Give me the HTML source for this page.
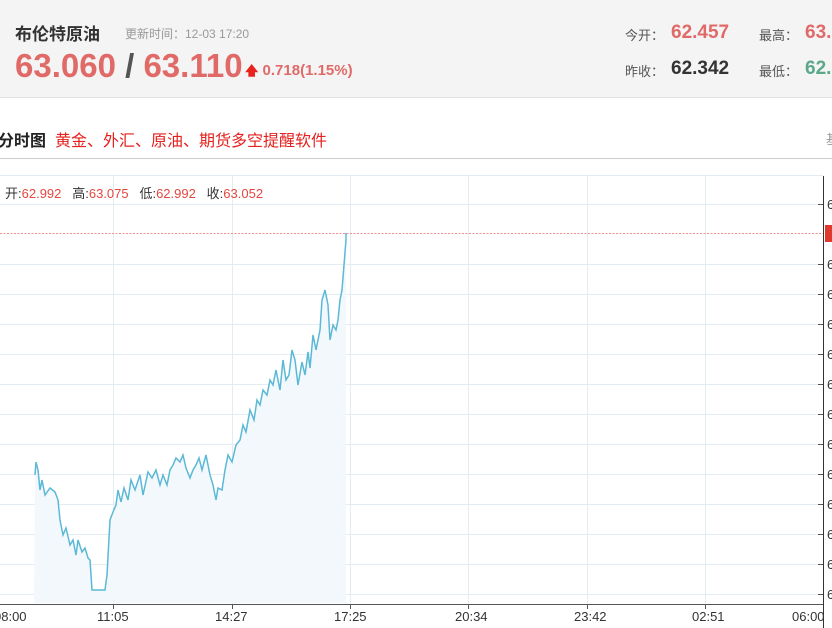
<!DOCTYPE html>
<html><head><meta charset="utf-8"><style>
*{margin:0;padding:0;box-sizing:border-box}
body{width:832px;height:628px;overflow:hidden;background:#fff;font-family:"Liberation Sans","Noto Sans CJK SC",sans-serif;position:relative}
.hd{position:absolute;left:0;top:0;width:832px;height:98px;background:#f4f4f4;border-bottom:1px solid #e2e2e2}
.a{position:absolute;white-space:nowrap}
</style></head><body>
<div class="hd"></div>
<div class="a" style="left:15px;top:20px;font-size:17px;font-weight:bold;color:#333">布伦特原油</div>
<div class="a" style="left:125px;top:25px;font-size:12px;color:#999">更新时间：12-03 17:20</div>
<div class="a" style="left:15px;top:47px;font-size:33px;font-weight:bold;color:#e06a68;letter-spacing:0px">63.060<span style="color:#555"> / </span>63.110</div>
<div class="a" style="left:245px;top:62px;font-size:15px;font-weight:bold;color:#e06a68"><span style="color:#e8231e;font-size:13px">&#129093;</span> 0.718(1.15%)</div>
<div class="a" style="left:625px;top:25px;font-size:13px;color:#555">今开：</div>
<div class="a" style="left:671px;top:22px;font-size:19px;font-weight:bold;color:#e06a68">62.457</div>
<div class="a" style="left:759px;top:25px;font-size:13px;color:#555">最高：</div>
<div class="a" style="left:805px;top:22px;font-size:19px;font-weight:bold;color:#e06a68">63.</div>
<div class="a" style="left:625px;top:61px;font-size:13px;color:#555">昨收：</div>
<div class="a" style="left:671px;top:58px;font-size:19px;font-weight:bold;color:#333">62.342</div>
<div class="a" style="left:759px;top:61px;font-size:13px;color:#555">最低：</div>
<div class="a" style="left:805px;top:58px;font-size:19px;font-weight:bold;color:#5aa888">62.</div>
<div class="a" style="left:-2px;top:127px;font-size:16px;font-weight:bold;color:#222">分时图</div>
<div class="a" style="left:55px;top:127px;font-size:16px;color:#e4211e">黄金、外汇、原油、期货多空提醒软件</div>
<div class="a" style="left:826px;top:129px;font-size:13px;color:#999">基</div>
<div class="a" style="left:0;top:158px;width:832px;height:1px;background:#ccc"></div>
<svg class="a" style="left:0;top:0" width="832" height="628">
<g stroke="#e3ecf3" stroke-width="1">
<line x1="0" y1="175.5" x2="823" y2="175.5"/>
<line x1="0" y1="204.5" x2="823" y2="204.5"/>
<line x1="0" y1="264.5" x2="823" y2="264.5"/><line x1="0" y1="294.5" x2="823" y2="294.5"/>
<line x1="0" y1="324.5" x2="823" y2="324.5"/><line x1="0" y1="354.5" x2="823" y2="354.5"/>
<line x1="0" y1="384.5" x2="823" y2="384.5"/><line x1="0" y1="414.5" x2="823" y2="414.5"/>
<line x1="0" y1="444.5" x2="823" y2="444.5"/><line x1="0" y1="474.5" x2="823" y2="474.5"/>
<line x1="0" y1="504.5" x2="823" y2="504.5"/><line x1="0" y1="534.5" x2="823" y2="534.5"/>
<line x1="0" y1="564.5" x2="823" y2="564.5"/><line x1="0" y1="594.5" x2="823" y2="594.5"/>
<line x1="113.5" y1="175" x2="113.5" y2="604"/><line x1="232.5" y1="175" x2="232.5" y2="604"/>
<line x1="350.5" y1="175" x2="350.5" y2="604"/><line x1="468.5" y1="175" x2="468.5" y2="604"/>
<line x1="587.5" y1="175" x2="587.5" y2="604"/><line x1="705.5" y1="175" x2="705.5" y2="604"/>
</g>
<line x1="0" y1="233.5" x2="823" y2="233.5" stroke="#f29090" stroke-dasharray="2,1.5"/>
<polygon fill="#f3f8fc" points="35,475 36,462 38,470 40,490 42,480 45,495 50,488 55,492 58,500 60,520 63,535 66,528 70,545 73,540 76,555 78,540 82,552 85,548 88,558 90,560 92,590 105,590 107,575 110,520 113,512 116,505 118,490 121,502 124,488 128,500 131,480 135,490 140,475 143,495 148,472 152,478 156,470 160,485 163,475 167,485 170,470 173,465 176,458 180,462 183,455 186,468 190,478 193,470 196,465 199,458 202,470 206,455 210,475 213,485 216,500 218,488 222,490 225,470 228,455 232,462 236,445 240,440 243,425 246,432 250,410 254,420 257,400 260,405 263,390 267,395 270,380 273,385 276,370 280,390 283,360 286,380 289,375 292,350 295,360 298,385 302,362 305,375 308,352 310,368 313,335 316,350 320,330 322,300 325,290 328,305 330,340 333,325 336,330 338,320 340,300 342,290 344,265 346,240 346,233 346,603 34,603"/>
<polyline fill="none" stroke="#5bb9d6" stroke-width="1.5" points="35,475 36,462 38,470 40,490 42,480 45,495 50,488 55,492 58,500 60,520 63,535 66,528 70,545 73,540 76,555 78,540 82,552 85,548 88,558 90,560 92,590 105,590 107,575 110,520 113,512 116,505 118,490 121,502 124,488 128,500 131,480 135,490 140,475 143,495 148,472 152,478 156,470 160,485 163,475 167,485 170,470 173,465 176,458 180,462 183,455 186,468 190,478 193,470 196,465 199,458 202,470 206,455 210,475 213,485 216,500 218,488 222,490 225,470 228,455 232,462 236,445 240,440 243,425 246,432 250,410 254,420 257,400 260,405 263,390 267,395 270,380 273,385 276,370 280,390 283,360 286,380 289,375 292,350 295,360 298,385 302,362 305,375 308,352 310,368 313,335 316,350 320,330 322,300 325,290 328,305 330,340 333,325 336,330 338,320 340,300 342,290 344,265 346,240 346,233"/>
<line x1="0" y1="604.5" x2="824" y2="604.5" stroke="#555"/>
<line x1="823.5" y1="176" x2="823.5" y2="628" stroke="#333"/>
<g stroke="#555"><line x1="113.5" y1="604" x2="113.5" y2="609"/><line x1="232.5" y1="604" x2="232.5" y2="609"/><line x1="350.5" y1="604" x2="350.5" y2="609"/><line x1="468.5" y1="604" x2="468.5" y2="609"/><line x1="587.5" y1="604" x2="587.5" y2="609"/><line x1="705.5" y1="604" x2="705.5" y2="609"/>
<line x1="818" y1="204.5" x2="823" y2="204.5"/><line x1="818" y1="264.5" x2="823" y2="264.5"/><line x1="818" y1="294.5" x2="823" y2="294.5"/><line x1="818" y1="324.5" x2="823" y2="324.5"/><line x1="818" y1="354.5" x2="823" y2="354.5"/><line x1="818" y1="384.5" x2="823" y2="384.5"/><line x1="818" y1="414.5" x2="823" y2="414.5"/><line x1="818" y1="444.5" x2="823" y2="444.5"/><line x1="818" y1="474.5" x2="823" y2="474.5"/><line x1="818" y1="504.5" x2="823" y2="504.5"/><line x1="818" y1="534.5" x2="823" y2="534.5"/><line x1="818" y1="564.5" x2="823" y2="564.5"/><line x1="818" y1="594.5" x2="823" y2="594.5"/></g>
<rect x="825" y="225" width="7" height="17" fill="#e03a2e"/>
<g font-size="13" fill="#333" font-family="Liberation Sans,sans-serif">
<text x="827" y="209">6</text><text x="827" y="269">6</text><text x="827" y="299">6</text><text x="827" y="329">6</text><text x="827" y="359">6</text><text x="827" y="389">6</text><text x="827" y="419">6</text><text x="827" y="449">6</text><text x="827" y="479">6</text><text x="827" y="509">6</text><text x="827" y="539">6</text><text x="827" y="569">6</text><text x="827" y="599">6</text>
<text x="-6" y="621">08:00</text><text x="97" y="621">11:05</text><text x="215" y="621">14:27</text><text x="334" y="621">17:25</text><text x="455" y="621">20:34</text><text x="574" y="621">23:42</text><text x="692" y="621">02:51</text><text x="792" y="621">06:00</text>
</g>
</svg>
<div class="a" style="left:5px;top:183px;font-size:13px;color:#333">开:<span style="color:#e4473f">62.992</span>&nbsp;&nbsp;&nbsp;高:<span style="color:#e4473f">63.075</span>&nbsp;&nbsp;&nbsp;低:<span style="color:#e4473f">62.992</span>&nbsp;&nbsp;&nbsp;收:<span style="color:#e4473f">63.052</span></div>
</body></html>
